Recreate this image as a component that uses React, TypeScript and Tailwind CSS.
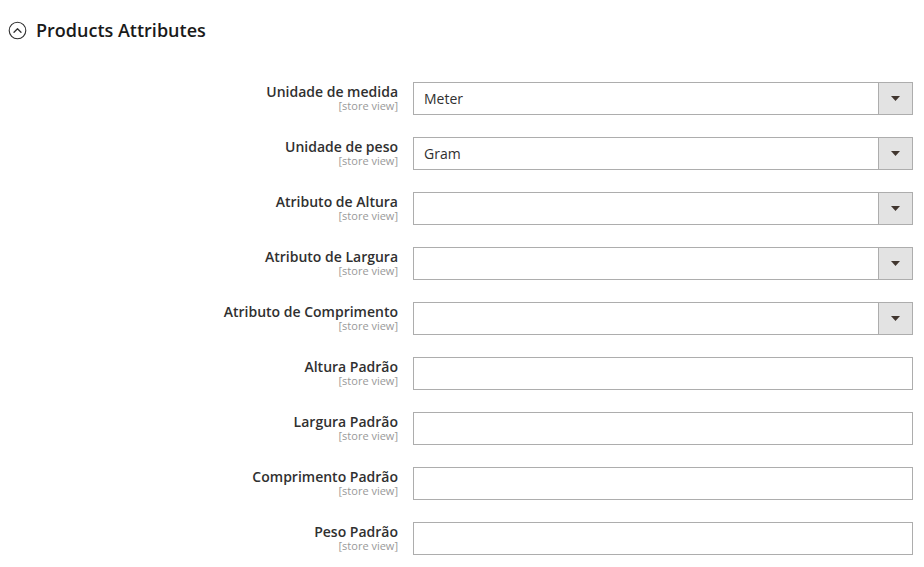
import React from 'react';

type Field = { label: string; kind: 'select' | 'text'; value?: string };

const fields: Field[] = [
  { label: 'Unidade de medida', kind: 'select', value: 'Meter' },
  { label: 'Unidade de peso', kind: 'select', value: 'Gram' },
  { label: 'Atributo de Altura', kind: 'select' },
  { label: 'Atributo de Largura', kind: 'select' },
  { label: 'Atributo de Comprimento', kind: 'select' },
  { label: 'Altura Padrão', kind: 'text' },
  { label: 'Largura Padrão', kind: 'text' },
  { label: 'Comprimento Padrão', kind: 'text' },
  { label: 'Peso Padrão', kind: 'text' },
];

const CollapseIcon: React.FC = () => (
  <svg width="19" height="19" viewBox="0 0 19 19" fill="none" className="mt-[3px] shrink-0">
    <circle cx="9.5" cy="9.5" r="8.3" stroke="#303030" strokeWidth="1.1" />
    <path d="M6 11.2 L9.5 7.7 L13 11.2" stroke="#303030" strokeWidth="1.3" strokeLinecap="round" strokeLinejoin="round" />
  </svg>
);

const FormRow: React.FC<{ field: Field }> = ({ field }) => (
  <div className="flex gap-[15px]">
    <div className="w-[398px] shrink-0 text-right pt-[1px]">
      <div className="text-[14px] leading-[17px] font-semibold text-[#303030]">{field.label}</div>
      <div className="text-[11px] leading-[11px] text-[#999999]">[store view]</div>
    </div>
    {field.kind === 'select' ? (
      <div className="flex w-[500px] h-[33px] border border-[#adadad] bg-white">
        <div className="flex-1 flex items-center pl-[10px] text-[14px] text-[#303030]">{field.value}</div>
        <div className="w-[34px] flex items-center justify-center bg-[#e3e3e3] border-l border-[#adadad]">
          <svg width="9" height="5" viewBox="0 0 9 5">
            <path d="M0 0 H9 L4.5 5 Z" fill="#41362f" />
          </svg>
        </div>
      </div>
    ) : (
      <div className="w-[500px] h-[33px] border border-[#adadad] bg-white" />
    )}
  </div>
);

const App: React.FC = () => {
  return (
    <div className="w-[924px] h-[567px] bg-white overflow-hidden font-['Open_Sans',sans-serif]">
      <div className="flex items-start gap-[9px] pl-[8px] pt-[18px]">
        <CollapseIcon />
        <h2 className="text-[18px] leading-[24px] font-semibold text-[#1a1a1a]">Products Attributes</h2>
      </div>
      <div className="mt-[40px] flex flex-col gap-[22px]">
        {fields.map((field, index) => (
          <FormRow key={index} field={field} />
        ))}
      </div>
    </div>
  );
};

export default App;
